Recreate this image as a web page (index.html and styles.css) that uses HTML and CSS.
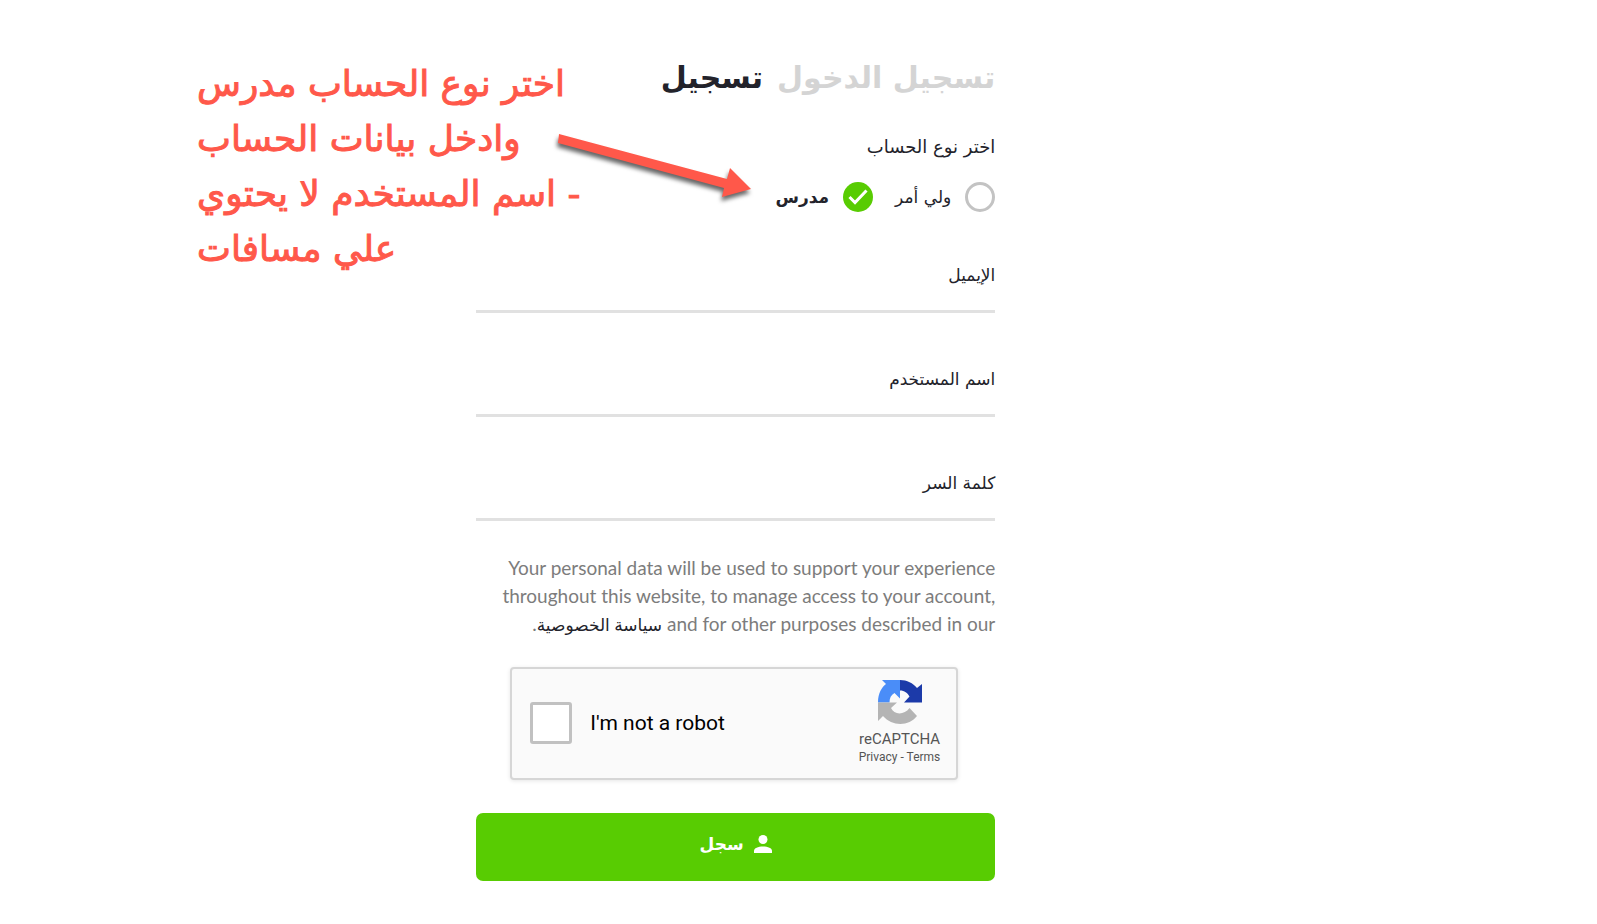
FILE: index.html
```html
<!DOCTYPE html>
<html lang="ar" dir="rtl">
  <head>
    <meta charset="utf-8"/>
    <meta name="viewport" content="width=device-width, initial-scale=1">
    <title>تسجيل</title>
    <link rel="stylesheet" href="styles.css">
  </head>
  <body>
    <main class="page">
      <form class="register">
        <nav class="tabs">
          <a class="tab" href="#login">تسجيل الدخول</a>
          <a class="tab active" href="#register">تسجيل</a>
        </nav>

        <fieldset class="account-type">
          <legend>اختر نوع الحساب</legend>
          <div class="options">
            <label class="option"><input type="radio" name="type" value="parent"> <span>ولي أمر</span></label>
            <label class="option"><input type="radio" name="type" value="teacher" checked> <span>مدرس</span></label>
          </div>
        </fieldset>

        <div class="fields">
          <div class="field">
            <label for="email">الإيميل</label>
            <input type="email" id="email">
          </div>
          <div class="field">
            <label for="username">اسم المستخدم</label>
            <input type="text" id="username">
          </div>
          <div class="field">
            <label for="password">كلمة السر</label>
            <input type="password" id="password">
          </div>
        </div>

        <p class="terms">Your personal data will be used to support your experience throughout this website, to manage access to your account, and for other purposes described in our <a href="#privacy">سياسة الخصوصية</a>.</p>

        <div class="captcha" dir="ltr">
          <label class="captcha-check"><input type="checkbox"> <span>I'm not a robot</span></label>
          <div class="captcha-brand">
            <svg width="46" height="46" viewBox="0 0 46 46">
              <path fill="#4a8df8" d="M1 23.500C1 14 5 8 9 5L5 1H23V19.500L17.500 14C14 16 12.500 19 12.500 23.500Z"/>
              <path fill="#1c3aa9" d="M23 1C30 1 36 4 40 9L45 5V23.500H27L32.500 17.500C30.500 14 27.500 11.500 23 11.500Z"/>
              <path fill="#b4b4b4" d="M1 23.500H20L14 29C17 36 27 36.500 32.500 29L40 37C32 47.500 15 47.500 6 37L1 42Z"/>
            </svg>
            <div class="captcha-name">reCAPTCHA</div>
            <div class="captcha-links"><a href="#privacy">Privacy</a> - <a href="#terms">Terms</a></div>
          </div>
        </div>

        <button type="submit" class="submit">
          <svg width="18" height="18" viewBox="0 0 18 18" fill="#fff">
            <circle cx="9" cy="4.500" r="4.500"/>
            <path d="M0 18V16C0 13 4 11.500 9 11.500S18 13 18 16V18Z"/>
          </svg>
          <span>سجل</span>
        </button>
      </form>

      <!-- hint over the form -->
      <div class="hint">
        اختر نوع الحساب مدرس<br/>
        وادخل بيانات الحساب<br/>
        - اسم المستخدم لا يحتوي<br/>
        علي مسافات
      </div>
      <svg class="arrow" width="200" height="76" viewBox="0 0 200 76">
        <path fill="#ff584a" d="M5 4L173 49L176 38L197 59L168 67L170 58L4 13Z"/>
      </svg>
    </main>
  </body>
</html>
```

FILE: styles.css
```css
* {
  box-sizing: border-box;
}
body {
  margin: 0;
  background-color: #fff;
  color: #23232b;
  font-family: "DejaVu Sans", sans-serif;
  font-size: 17px;
  line-height: 28px;
}
a {
  color: inherit;
  text-decoration: none;
}
.page {
  position: relative;
  direction: ltr;
  padding: 48px 16px 40px 29.8%;
}
.register {
  direction: rtl;
  width: 47%;
}
.tabs {
  display: flex;
  gap: 14px;
  font-size: 30px;
  font-weight: bold;
  line-height: 60px;
  white-space: nowrap;
}
.tab {
  color: #d4d4d4;
}
.tab.active {
  color: #23232b;
}
.account-type {
  margin: 25px 0 48px;
  padding: 0;
  border: 0;
}
.account-type legend {
  padding: 0;
  font-size: 18px;
}
.options {
  display: flex;
  gap: 22px;
  padding-top: 21px;
}
.option {
  display: flex;
  align-items: center;
  gap: 14px;
  height: 30px;
}
.option input {
  appearance: none;
  width: 30px;
  height: 30px;
  margin: 0;
  border: 3px solid #c3c3c3;
  border-radius: 50%;
}
.option input:checked {
  border: 0;
  background: #58cc02 url("data:image/svg+xml,%3Csvg xmlns='http://www.w3.org/2000/svg' viewBox='0 0 30 30'%3E%3Cpath d='M6.500 15l5.500 5.500L23.500 8.500' fill='none' stroke='white' stroke-width='3'/%3E%3C/svg%3E");
}
.option input:checked + span {
  font-weight: bold;
}
.fields {
  display: flex;
  flex-direction: column;
  gap: 51px;
}
.field label {
  display: block;
  line-height: 30px;
}
.field input {
  display: block;
  width: 100%;
  height: 23px;
  padding: 0;
  border: 0;
  border-bottom: 3px solid #e1e1e1;
  background: none;
  font: inherit;
  outline: none;
}
.terms {
  margin: 33px 0 28px;
  color: #7c7c7c;
  font-family: Lato, "DejaVu Sans", sans-serif;
  font-size: 19px;
}
.terms a {
  color: #23232b;
  font-size: 17px;
}
.captcha {
  display: flex;
  align-items: center;
  justify-content: space-between;
  width: 448px;
  max-width: 100%;
  height: 113px;
  margin: 0 37px 33px auto;
  padding: 0 16px 2px 18px;
  border: 2px solid #d6d6d6;
  border-radius: 4px;
  background-color: #fafafa;
  box-shadow: 0 1px 4px rgba(0, 0, 0, 0.1);
  font-family: Roboto, sans-serif;
}
.captcha-check {
  display: flex;
  align-items: center;
  gap: 18px;
  color: #000;
  font-size: 21px;
}
.captcha-check input {
  appearance: none;
  width: 42px;
  height: 42px;
  margin: 0;
  border: 3px solid #c1c1c1;
  border-radius: 3px;
  background-color: #fff;
}
.captcha-brand {
  color: #555;
  font-size: 15px;
  line-height: 18px;
  text-align: center;
}
.captcha-brand svg {
  display: block;
  margin: 0 auto 5px;
}
.captcha-links {
  font-size: 12px;
}
.submit {
  display: flex;
  align-items: center;
  justify-content: center;
  gap: 10px;
  width: 100%;
  height: 68px;
  padding: 0 0 6px;
  border: 0;
  border-radius: 7px;
  background-color: #58cc02;
  color: #fff;
  font: inherit;
  font-weight: bold;
  cursor: pointer;
}
.hint {
  position: absolute;
  top: 56px;
  left: 197px;
  direction: rtl;
  color: #ff584a;
  font-size: 36px;
  line-height: 55px;
  text-align: left;
  white-space: nowrap;
  -webkit-text-stroke: 1px #ff584a;
}
.arrow {
  position: absolute;
  top: 130px;
  left: 554px;
  filter: drop-shadow(-1px 4px 2px rgba(0, 0, 0, 0.6));
}
```
